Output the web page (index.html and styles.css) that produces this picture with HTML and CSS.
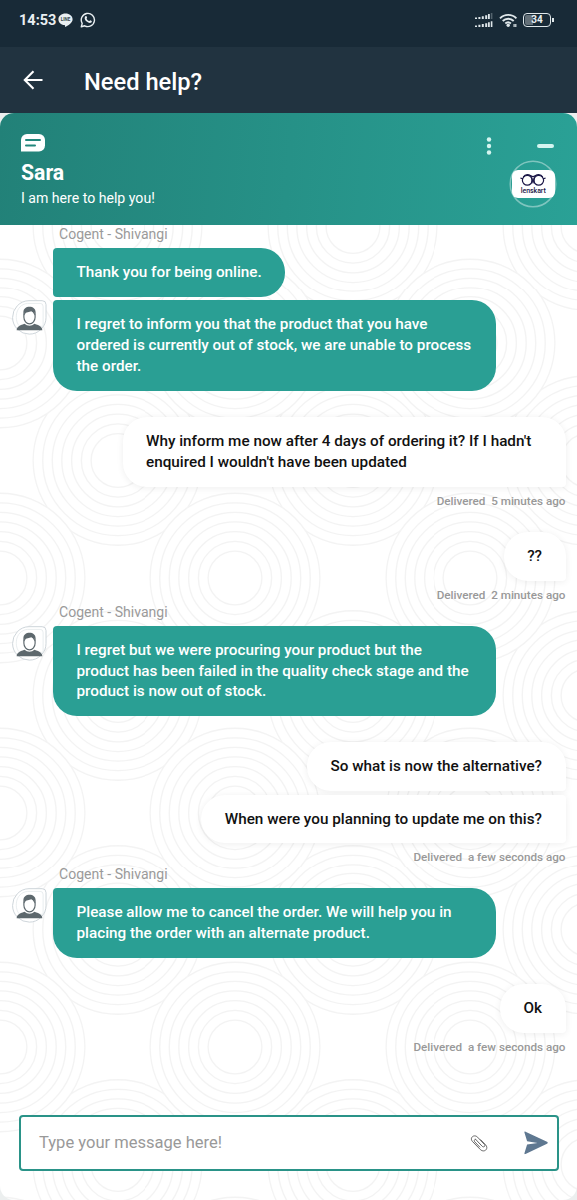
FILE: index.html
```html
<!DOCTYPE html>
<html lang="en">
  <head>
    <meta charset="UTF-8" />
    <meta name="viewport" content="width=device-width, initial-scale=1.0" />
    <title>Need help?</title>
    <link rel="stylesheet" href="styles.css">
  </head>
  <body>
    <div class="status">
      <span class="time">14:53</span>
      <svg class="line-icon" width="15" height="15" viewBox="0 0 15 15">
        <path d="M7.5 0.6C3.5 0.6 0.4 3.1 0.4 6.4c0 3 2.6 5.2 6 5.7 0.7 0.1 0.8 0.6 0.6 1.9 3-1.5 7.6-4.4 7.6-7.6C14.6 3.1 11.5 0.6 7.5 0.6z" fill="#e9eff2" />
        <text x="7.5" y="8.3" text-anchor="middle" class="line-text">LINE</text>
      </svg>
      <svg class="whatsapp" width="16" height="16" viewBox="0 0 16 16">
        <path d="M1.3 14.7l0.9-3.3A6.6 6.6 0 1 1 4.7 13.800z" fill="none" stroke="#e9eff2" stroke-width="1.4" stroke-linejoin="round" />
        <path d="M5.400 4.300c0.400-0.500 0.900-0.400 1.100 0l0.600 1.300c0.100 0.300-0.500 0.900-0.500 1.100 0.600 1.200 1.400 1.900 2.600 2.400 0.300 0 0.800-0.900 1.100-0.800l1.400 0.700c0.300 0.200 0.100 1.200-0.400 1.600-1 0.800-2.300 0.500-3.900-0.500C5.800 9 4.900 7.600 4.700 6.400 4.600 5.500 4.900 4.700 5.400 4.300z" fill="#e9eff2" />
      </svg>
      <div class="status-right">
        <svg width="18" height="15" viewBox="0 0 18 15" fill="#dfe7ea">
          <path d="M0 4.500h2v1.500h-2zM3.400 4h2v2h-2zM6.800 3.300h2v2.700h-2zM10.200 2.200h2v3.800h-2zM13 1h1.800v5h-1.800z" />
          <path d="M15.800 0h1.600v6h-1.600z" opacity=".3" />
          <path d="M0 12.500h2v1.500h-2zM3.400 11.800h2v2.200h-2zM6.800 11h2v3h-2zM10.200 10.200h2v3.800h-2zM13 9.200h1.800v4.800h-1.800zM15.800 8.200h1.600v5.800h-1.600z" />
        </svg>
        <svg class="wifi" width="19" height="15" viewBox="0 0 19 15" fill="none" stroke="#dfe7ea" stroke-width="1.9">
          <path d="M1 5.300a11.500 11.500 0 0 1 16.400 0M3.700 8a7.800 7.800 0 0 1 11 0M6.300 10.500a4.200 4.200 0 0 1 5.600 0" />
          <circle cx="9.200" cy="12.300" r="1.700" fill="#dfe7ea" stroke="none" />
          <path d="M14.500 12.500h3" stroke-width="3" stroke-dasharray="1.200 .5" />
        </svg>
        <div class="battery">34</div>
      </div>
    </div>

    <div class="appbar">
      <svg width="22" height="20" viewBox="0 0 22 20" fill="none" stroke="#fff" stroke-width="2.100">
        <path d="M20.500 10H3M11.500 1.300L2.800 10l8.700 8.700" />
      </svg>
      <h1 class="appbar-title">Need help?</h1>
    </div>

    <div class="chat-outer">
      <div class="chat">
        <header class="chat-header">
          <div class="agent">
            <svg width="24" height="18" viewBox="0 0 24 18">
              <path d="M6 0h12a6 6 0 0 1 6 6v5.500a6 6 0 0 1-6 6H0V6a6 6 0 0 1 6-6z" fill="#fff" />
              <path d="M5 6h14M5 11.500h9" stroke="#23877d" stroke-width="2" stroke-linecap="round" />
            </svg>
            <div class="agent-name">Sara</div>
            <div class="agent-text">I am here to help you!</div>
          </div>
          <div class="controls">
            <div class="buttons">
              <svg width="6" height="18" viewBox="0 0 6 18" fill="#d5f5f0">
                <circle cx="3" cy="2.500" r="2.200" />
                <circle cx="3" cy="9" r="2.200" />
                <circle cx="3" cy="15.500" r="2.200" />
              </svg>
              <span class="minimize"></span>
            </div>
            <svg class="brand" width="48" height="48" viewBox="0 0 48 48">
              <circle cx="24" cy="24" r="22.800" fill="none" stroke="#fff" stroke-opacity=".4" stroke-width="1.500" />
              <rect x="3" y="10" width="43" height="28" rx="6" fill="#fff" />
              <g fill="none" stroke="#1b1747">
                <circle cx="18.300" cy="20.300" r="4.900" stroke-width="1.200" />
                <circle cx="29.700" cy="20.300" r="4.900" stroke-width="1.200" />
                <path d="M11.400 18l2.500 0.800M36.600 18l-2.500 0.800M14.300 17c1-1.600 2-2.300 4-2.300 2.800 0 4 2 5.700 2 1.700 0 2.900-2 5.700-2 2 0 3 0.700 4 2.300M22.300 17.500c1.300 2 1.300 4 0.300 6M25.700 17.500c-1.300 2-1.300 4-0.300 6" stroke-width="1.300" />
              </g>
              <text x="24.300" y="32.500" text-anchor="middle" class="brand-text" textLength="25">lenskart</text>
            </svg>
          </div>
        </header>

        <main class="messages">
          <div class="sender">Cogent - Shivangi</div>
          <div class="row">
            <p class="bubble bubble-in first">Thank you for being online.</p>
          </div>
          <div class="row">
            <svg class="avatar" viewBox="0 0 36 36"><use href="#person" /></svg>
            <p class="bubble bubble-in wide">I regret to inform you that the product that you have<br>ordered is currently out of stock, we are unable to process<br>the order.</p>
          </div>

          <div class="reply">
            <p class="bubble bubble-out wide">Why inform me now after 4 days of ordering it? If I hadn't<br>enquired I wouldn't have been updated</p>
            <div class="meta">Delivered&nbsp; 5 minutes ago</div>
          </div>
          <div class="reply next">
            <p class="bubble bubble-out">??</p>
            <div class="meta">Delivered&nbsp; 2 minutes ago</div>
          </div>

          <div class="sender">Cogent - Shivangi</div>
          <div class="row">
            <svg class="avatar" viewBox="0 0 36 36"><use href="#person" /></svg>
            <p class="bubble bubble-in wide">I regret but we were procuring your product but the<br>product has been failed in the quality check stage and the<br>product is now out of stock.</p>
          </div>

          <div class="reply">
            <p class="bubble bubble-out">So what is now the alternative?</p>
            <p class="bubble bubble-out last">When were you planning to update me on this?</p>
            <div class="meta">Delivered&nbsp; a few seconds ago</div>
          </div>

          <div class="sender">Cogent - Shivangi</div>
          <div class="row">
            <svg class="avatar" viewBox="0 0 36 36"><use href="#person" /></svg>
            <p class="bubble bubble-in wide">Please allow me to cancel the order. We will help you in<br>placing the order with an alternate product.</p>
          </div>

          <div class="reply">
            <p class="bubble bubble-out">Ok</p>
            <div class="meta">Delivered&nbsp; a few seconds ago</div>
          </div>
        </main>

        <div class="composer">
          <span class="placeholder">Type your message here!</span>
          <svg class="clip" width="18" height="18" viewBox="0 0 18 18" fill="none" stroke="#666" stroke-linecap="round">
            <path d="M5.500 5.200l6.600 7c1.800 1.700 3.700-0.200 2.200-1.900L7.600 3.200C4.200-0.200-0.700 3.600 2.300 7.300l8 8.200c3.900 3.700 8.800-0.700 5.300-4.600l-4.900-5.100M5.500 5.200c-1.500 0.400-1.600 1.700-0.700 2.700l5 5.200" />
          </svg>
          <svg class="send" width="24" height="24" viewBox="0 0 24 24">
            <path d="M1.500 0.700L23 10.800c1 0.500 1 1.400 0 1.900L1.500 23c-0.800 0.400-1.300-0.100-1-1l2.600-8.400L13.500 12 3.100 10.300 0.500 1.700C0.200 0.800 0.700 0.300 1.500 0.700z" fill="#5f7891" />
          </svg>
        </div>
      </div>
    </div>

    <svg width="0" height="0" class="defs">
      <symbol id="person" viewBox="0 0 36 36">
        <path d="M17.500 0.700H31a4 4 0 0 1 4 4V18A17.200 17.200 0 1 1 17.500 0.700z" fill="#fff" stroke="#ccd4d9" />
        <path d="M16 3.500H29a3 3 0 0 1 3 3V27H8C2.500 23 2 5 16 3.500z" fill="none" stroke="#e3e8ea" stroke-width=".8" />
        <path d="M4.800 31.200c0.300-3.500 2.200-4.700 8.200-6.700 2.600 2.600 7.400 2.600 10 0 6 2 7.900 3.200 8.200 6.700z" fill="#5d686d" />
        <ellipse cx="18" cy="17.500" rx="5.800" ry="7" fill="#fff" stroke="#5d686d" stroke-width="1.200" />
        <path d="M11.700 17.500V12.500C11.700 9 14.500 7 18 7s6.300 2 6.300 5.500v5l-1.200-4.500c-1.200-0.300-2-0.800-2.700-1.600-1.500 0.900-4.500 1.500-7.400 1.600z" fill="#5d686d" />
      </symbol>
    </svg>
  </body>
</html>
```
FILE: styles.css
```css
body {
  margin: 0;
  height: 1200px;
  overflow: hidden;
  display: flex;
  flex-direction: column;
  font-family: Roboto, "Liberation Sans", sans-serif;
}
svg {
  display: block;
  flex: none;
}
.defs {
  position: absolute;
}

/* phone bars */
.status {
  height: 47px;
  box-sizing: border-box;
  padding: 0 26px 7px 19px;
  display: flex;
  align-items: center;
  background: #182a37;
  color: #e9eff2;
}
.time {
  width: 39px;
  font-size: 14.5px;
  font-weight: 700;
}
.line-text {
  font-size: 4.5px;
  font-weight: 700;
  fill: #35434c;
}
.whatsapp {
  margin-left: 7px;
}
.status-right {
  margin-left: auto;
  display: flex;
  align-items: center;
}
.wifi {
  margin-left: 6px;
}
.battery {
  position: relative;
  box-sizing: border-box;
  width: 28px;
  height: 14px;
  margin-left: 5px;
  border: 1.5px solid #dfe7ea;
  border-radius: 4px;
  background: linear-gradient(90deg, #647078 34%, transparent 34%) content-box;
  padding: 1px;
  font-size: 10px;
  line-height: 10px;
  font-weight: 700;
  text-align: center;
}
.battery::after {
  content: "";
  position: absolute;
  right: -4px;
  top: 4px;
  width: 2px;
  height: 4px;
  background: #dfe7ea;
}
.appbar {
  height: 66px;
  padding-left: 22px;
  display: flex;
  align-items: center;
  gap: 40px;
  background: #213340;
}
.appbar-title {
  margin: 3px 0 0;
  font-size: 23.7px;
  font-weight: 500;
  color: #fff;
}

/* chat */
.chat-outer {
  flex: 1;
  display: flex;
  background: #ecefef;
}
.chat {
  flex: 1;
  display: flex;
  flex-direction: column;
  overflow: hidden;
  border-radius: 14px;
  background: #fff url("data:image/svg+xml,%3Csvg xmlns='http://www.w3.org/2000/svg' xmlns:xlink='http://www.w3.org/1999/xlink' width='235.2' height='234.6' viewBox='0 0 235.2 234.6'%3E%3Cdefs%3E%3Cg id='c' fill='none' stroke='%23f3f3f3' stroke-width='1.3'%3E%3Ccircle r='84.6' fill='white'/%3E%3Ccircle r='75'/%3E%3Ccircle r='65.5'/%3E%3Ccircle r='56'/%3E%3Ccircle r='46.2'/%3E%3Ccircle r='36.5'/%3E%3Ccircle r='26.8'/%3E%3C/g%3E%3C/defs%3E%3Cuse xlink:href='%23c' x='117.6' y='117.3'/%3E%3Cuse xlink:href='%23c'/%3E%3Cuse xlink:href='%23c' x='235.2'/%3E%3Cuse xlink:href='%23c' y='234.6'/%3E%3Cuse xlink:href='%23c' x='235.2' y='234.6'/%3E%3C/svg%3E") 0 -4.2px / 235.2px 234.6px;
}
.chat-header {
  height: 112px;
  box-sizing: border-box;
  padding: 21px 20px 0 21px;
  display: flex;
  justify-content: space-between;
  background: linear-gradient(95deg, #228178, #2aa196);
  color: #fff;
}
.agent-name {
  margin-top: 8px;
  font-size: 21.2px;
  line-height: 26px;
  font-weight: 700;
}
.agent-text {
  margin-top: 3px;
  font-size: 14.1px;
  line-height: 18px;
}
.controls {
  display: flex;
  flex-direction: column;
  align-items: flex-end;
}
.buttons {
  margin: 3px 3px 0 0;
  display: flex;
  align-items: center;
  gap: 45px;
}
.minimize {
  width: 17px;
  height: 4px;
  border-radius: 2px;
  background: #d5f5f0;
}
.brand {
  margin-top: 5px;
}
.brand-text {
  font-size: 7px;
  font-weight: 500;
  fill: #1b1747;
}
.messages {
  flex: 1;
  padding: 0 11.5px 0 12px;
}
.sender {
  margin: 0 0 5px 47px;
  font-size: 14.05px;
  line-height: 18px;
  color: #9a9a9a;
}
.row {
  display: flex;
  align-items: flex-start;
  gap: 6px;
}
.avatar {
  width: 35px;
  height: 35px;
}
.bubble {
  box-sizing: border-box;
  width: fit-content;
  margin: 0;
  padding: 14px 23.5px;
  font-size: 15.27px;
  line-height: 20.9px;
  font-weight: 500;
  white-space: nowrap;
}
.wide {
  width: 443px;
}
.bubble-in {
  border-radius: 4px 24px 24px 24px;
  background: #2a9f94;
  color: #fff;
}
.first {
  margin: 0 0 3.5px 41px;
  border-radius: 4px 24px 24px 4px;
}
.reply {
  margin-top: 25.8px;
  display: flex;
  flex-direction: column;
  align-items: flex-end;
}
.next {
  margin-top: 23px;
}
.bubble-out {
  border-radius: 24px 24px 4px 24px;
  background: #fff;
  color: #111;
  box-shadow: 0 1px 7px rgba(0, 0, 0, 0.07);
}
.last {
  margin-top: 3.5px;
  border-radius: 24px 4px 4px 24px;
}
.meta {
  margin-top: 6px;
  font-size: 11.7px;
  line-height: 16px;
  font-weight: 500;
  color: #999;
}
.composer {
  height: 56px;
  box-sizing: border-box;
  margin: 0 18px 29px 19px;
  padding: 0 9px 0 18px;
  display: flex;
  align-items: center;
  border: 2px solid #2a9388;
  border-radius: 4px;
  background: #fff;
}
.placeholder {
  flex: 1;
  margin-top: -2px;
  font-size: 16.55px;
  color: #999;
}
.send {
  margin-left: 36px;
}
```
